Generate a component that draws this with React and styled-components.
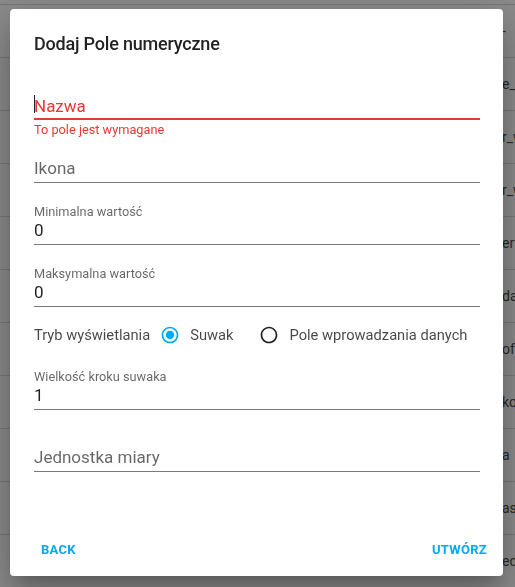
import React from "react";
import styled, { createGlobalStyle } from "styled-components";

const BLUE = "#03a9f4";
const RED = "#e53935";

const GlobalStyle = createGlobalStyle`
  html, body {
    margin: 0;
    padding: 0;
  }
  body {
    font-family: Roboto, "Noto Sans", "Liberation Sans", sans-serif;
    background: #fff;
    overflow: hidden;
  }
`;

// strona pod spodem (lista widoczna po prawej krawedzi)
const Table = styled.div`
  width: 100%;
`;

const TopEdge = styled.div`
  height: 4px;
  border-bottom: 1px solid #d4d4d4;
`;

const TableRow = styled.div`
  height: 52px;
  line-height: 52px;
  border-bottom: 1px solid #d4d4d4;
  padding-left: 502px;
  font-size: 14px;
  color: #333;
  white-space: nowrap;
  overflow: hidden;
`;

const Overlay = styled.div`
  position: fixed;
  inset: 0;
  background: rgba(33, 33, 33, 0.52);
  display: flex;
  align-items: flex-start;
  padding: 9px 0 0 10px;
`;

const Dialog = styled.div`
  width: 493px;
  background: #fff;
  border-radius: 4px;
  display: flex;
  flex-direction: column;
  box-shadow: 0 11px 15px -7px rgba(0, 0, 0, 0.2),
    0 24px 38px 3px rgba(0, 0, 0, 0.14), 0 9px 46px 8px rgba(0, 0, 0, 0.12);
`;

const Title = styled.div`
  padding: 19px 24px 0;
  font-size: 18px;
  line-height: 32px;
  font-weight: 500;
  letter-spacing: -0.2px;
  color: rgba(0, 0, 0, 0.87);
`;

const Form = styled.div`
  padding: 15px 23px 0 24px;
  display: flex;
  flex-direction: column;
`;

const Field = styled.div`
  display: flex;
  flex-direction: column;
`;

const FloatLabel = styled.div`
  box-sizing: border-box;
  height: 18px;
  padding-top: 7px;
  font-size: 12.75px;
  line-height: 12px;
  color: rgba(0, 0, 0, 0.6);
`;

const InputSlot = styled.div`
  height: ${(p) => (p.$error ? 25 : 27)}px;
  line-height: 27px;
  font-size: 17px;
  border-bottom: ${(p) => (p.$error ? `2px solid ${RED}` : "1px solid #7a7a7a")};
  display: flex;
  align-items: flex-start;
  white-space: nowrap;
`;

const Value = styled.span`
  color: rgba(0, 0, 0, 0.87);
`;

const Placeholder = styled.span`
  color: ${(p) => (p.$error ? RED : "rgba(0, 0, 0, 0.6)")};
`;

const Caret = styled.span`
  display: inline-block;
  width: 1px;
  height: 18px;
  margin-top: 2px;
  margin-right: -1px;
  background: #222;
`;

const Details = styled.div`
  box-sizing: border-box;
  height: ${(p) => (p.$error ? 17 : 16)}px;
  padding-top: ${(p) => (p.$error ? 4 : 3)}px;
  font-size: 12.75px;
  line-height: 12px;
  color: ${RED};
`;

const RadioRow = styled.div`
  height: 41px;
  display: flex;
  align-items: flex-start;
  font-size: 14.7px;
  line-height: 24px;
  color: rgba(0, 0, 0, 0.72);
  white-space: nowrap;
`;

const Legend = styled.span`
  margin-right: 8px;
  flex-shrink: 0;
`;

const Option = styled.label`
  display: flex;
  align-items: center;
  gap: 8px;
  height: 24px;
  flex-shrink: 0;
  & + & {
    margin-left: 24px;
  }
`;

const RadioIcon = styled.span`
  width: 24px;
  height: 24px;
  display: flex;
  align-items: center;
  justify-content: center;
  color: ${(p) => (p.$on ? BLUE : "rgba(0, 0, 0, 0.87)")};
`;

const Actions = styled.div`
  margin-top: 44px;
  padding: 0 16px 8px 31px;
  display: flex;
  justify-content: space-between;
`;

const Button = styled.button`
  border: 0;
  background: none;
  padding: 0;
  height: 36px;
  line-height: 36px;
  font-family: inherit;
  font-size: 13px;
  font-weight: 700;
  letter-spacing: 0.3px;
  text-transform: uppercase;
  color: ${BLUE};
  cursor: pointer;
`;

const Radio = ({ on }) => (
  <RadioIcon $on={on}>
    <svg width="20" height="20" viewBox="0 0 24 24" fill="currentColor">
      {on ? (
        <path d="M12 7c-2.76 0-5 2.24-5 5s2.24 5 5 5 5-2.24 5-5-2.24-5-5-5zm0-5C6.48 2 2 6.48 2 12s4.48 10 10 10 10-4.48 10-10S17.52 2 12 2zm0 18c-4.42 0-8-3.58-8-8s3.58-8 8-8 8 3.58 8 8-3.58 8-8 8z" />
      ) : (
        <path d="M12 2C6.48 2 2 6.48 2 12s4.48 10 10 10 10-4.48 10-10S17.52 2 12 2zm0 18c-4.42 0-8-3.58-8-8s3.58-8 8-8 8 3.58 8 8-3.58 8-8 8z" />
      )}
    </svg>
  </RadioIcon>
);

const TextField = ({ label, value, placeholder, error, focused }) => (
  <Field>
    <FloatLabel>{label}</FloatLabel>
    <InputSlot $error={!!error}>
      {focused && <Caret />}
      {value ? (
        <Value>{value}</Value>
      ) : (
        <Placeholder $error={!!error}>{placeholder}</Placeholder>
      )}
    </InputSlot>
    <Details $error={!!error}>{error}</Details>
  </Field>
);

const rows = ["-", "e_v", "r_w", "r_w", "ert", "da", "off", "ko", "a", "as", "ed"];

const App = () => {
  return (
    <>
      <GlobalStyle />
      <Table>
        <TopEdge />
        {rows.map((r, i) => (
          <TableRow key={i}>{r}</TableRow>
        ))}
      </Table>
      <Overlay>
        <Dialog>
          <Title>Dodaj Pole numeryczne</Title>
          <Form>
            <TextField placeholder="Nazwa" error="To pole jest wymagane" focused />
            <TextField placeholder="Ikona" />
            <TextField label="Minimalna wartość" value="0" />
            <TextField label="Maksymalna wartość" value="0" />
            <RadioRow>
              <Legend>Tryb wyświetlania</Legend>
              <Option>
                <Radio on />
                Suwak
              </Option>
              <Option>
                <Radio />
                Pole wprowadzania danych
              </Option>
            </RadioRow>
            <TextField label="Wielkość kroku suwaka" value="1" />
            <TextField placeholder="Jednostka miary" />
          </Form>
          <Actions>
            <Button>Back</Button>
            <Button>Utwórz</Button>
          </Actions>
        </Dialog>
      </Overlay>
    </>
  );
};

export default App;
